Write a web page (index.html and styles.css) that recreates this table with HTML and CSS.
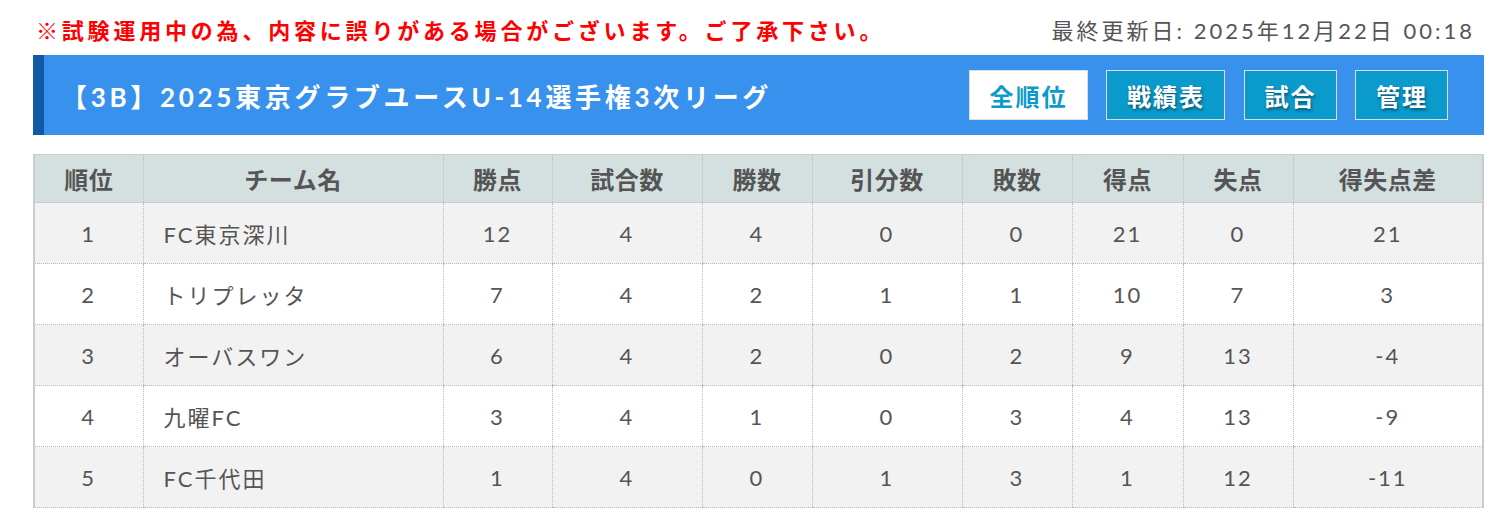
FILE: index.html
```html
<!DOCTYPE html>
<html lang="ja">
<head>
<meta charset="utf-8">
<title>順位表</title>
<link rel="stylesheet" href="styles.css">
</head>
<body>
<div class="page">
  <div class="topline">
    <p class="notice">※試験運用中の為、内容に誤りがある場合がございます。ご了承下さい。</p>
    <p class="updated">最終更新日: 2025年12月22日 00:18</p>
  </div>
  <div class="titlebar">
    <h1 class="title">【3B】2025東京グラブユースU-14選手権3次リーグ</h1>
    <nav class="tabs">
      <a class="tab tab-active">全順位</a>
      <a class="tab">戦績表</a>
      <a class="tab">試合</a>
      <a class="tab">管理</a>
    </nav>
  </div>
  <table class="standings">
    <colgroup>
      <col class="c-rank"><col class="c-team"><col class="c-pts"><col class="c-w"><col class="c-n"><col class="c-w"><col class="c-n"><col class="c-gf"><col class="c-n"><col class="c-diff">
    </colgroup>
    <thead>
      <tr><th>順位</th><th>チーム名</th><th>勝点</th><th>試合数</th><th>勝数</th><th>引分数</th><th>敗数</th><th>得点</th><th>失点</th><th>得失点差</th></tr>
    </thead>
    <tbody>
      <tr><td>1</td><td class="team">FC東京深川</td><td>12</td><td>4</td><td>4</td><td>0</td><td>0</td><td>21</td><td>0</td><td>21</td></tr>
      <tr><td>2</td><td class="team">トリプレッタ</td><td>7</td><td>4</td><td>2</td><td>1</td><td>1</td><td>10</td><td>7</td><td>3</td></tr>
      <tr><td>3</td><td class="team">オーバスワン</td><td>6</td><td>4</td><td>2</td><td>0</td><td>2</td><td>9</td><td>13</td><td>-4</td></tr>
      <tr><td>4</td><td class="team">九曜FC</td><td>3</td><td>4</td><td>1</td><td>0</td><td>3</td><td>4</td><td>13</td><td>-9</td></tr>
      <tr><td>5</td><td class="team">FC千代田</td><td>1</td><td>4</td><td>0</td><td>1</td><td>3</td><td>1</td><td>12</td><td>-11</td></tr>
    </tbody>
  </table>
</div>
</body>
</html>
```

FILE: styles.css
```css
html, body {
  margin: 0;
  padding: 0;
  background: #fff;
}
body {
  font-family: "Lato", "Noto Sans CJK JP", sans-serif;
  color: #555;
}
.page {
  margin: 0 23px 0 33px;
}
.topline {
  display: flex;
  justify-content: space-between;
  align-items: center;
  height: 55px;
  padding: 3px 0 0 3px;
  box-sizing: border-box;
}
.notice {
  margin: 0;
  color: #f00;
  font-weight: bold;
  font-size: 22px;
  letter-spacing: 3.8px;
}
.updated {
  margin: 0 9px 0 0;
  font-size: 22px;
  letter-spacing: 3px;
  color: #555;
}
.titlebar {
  display: flex;
  justify-content: space-between;
  align-items: center;
  height: 80px;
  background: #3891ec;
  border-left: 11px solid #1158a5;
  padding: 0 36px 0 17px;
}
.title {
  margin: 0;
  color: #fff;
  font-size: 26px;
  font-weight: bold;
  letter-spacing: 3.7px;
}
.tabs {
  display: flex;
  gap: 18.5px;
}
.tab {
  display: flex;
  align-items: center;
  justify-content: center;
  height: 50px;
  box-sizing: border-box;
  padding: 0 19px 0 20px;
  border: 1px solid #ddd;
  background: #0a9acb;
  color: #fff;
  font-size: 24px;
  font-weight: bold;
  letter-spacing: 2px;
  text-shadow: 1px 2px 3px rgba(0, 0, 0, 0.45);
}
.tab-active {
  background: #fff;
  color: #0a9acb;
  text-shadow: none;
}
.standings {
  width: 100%;
  margin-top: 19px;
  border-collapse: collapse;
  table-layout: fixed;
  border-left: 2px solid #ccc;
  border-right: 2px solid #ccc;
  border-top: 1px solid #ccc;
}
.c-rank { width: 109px; }
.c-team { width: 300px; }
.c-pts { width: 109px; }
.c-n { width: 110px; }
.c-gf { width: 111px; }
.c-w { width: 150px; }
.c-diff { width: auto; }
.standings th {
  height: 47px;
  background: #d4e0e0;
  font-size: 24px;
  font-weight: bold;
  letter-spacing: 0.5px;
  color: #555;
  border-left: 1px dotted #bbb;
  border-bottom: 1px solid #ccc;
  padding: 0;
}
.standings td {
  height: 60px;
  text-align: center;
  font-size: 22px;
  letter-spacing: 2px;
  color: #555;
  border-left: 1px dotted #bbb;
  border-bottom: 1px dotted #bbb;
  padding: 0;
}
.standings td.team {
  text-align: left;
  padding-left: 20px;
}
.standings tbody tr:nth-child(odd) td {
  background: #f2f2f2;
}
.standings tbody tr:nth-child(even) td {
  background: #fff;
}
```
